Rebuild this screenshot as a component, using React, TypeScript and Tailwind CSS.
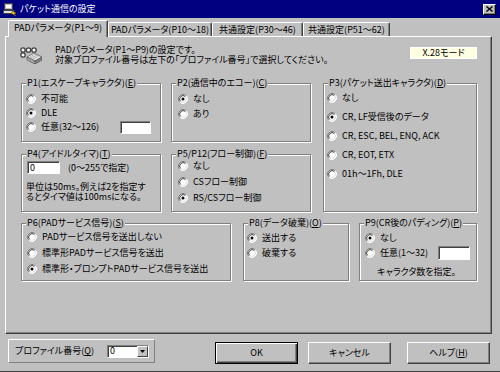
import React from 'react';

// Win2000-style dialog: パケット通信の設定

const Radio: React.FC<{ on?: boolean }> = ({ on }) => (
  <svg width="10" height="10" viewBox="0 0 10 10" className="shrink-0">
    <circle cx="5" cy="5" r="4" fill="#fff" />
    <path d="M1.82 8.18A4.5 4.5 0 0 1 8.18 1.82" fill="none" stroke="#808080" />
    <path d="M8.18 1.82A4.5 4.5 0 0 1 1.82 8.18" fill="none" stroke="#fff" />
    <path d="M2.53 7.47A3.5 3.5 0 0 1 7.47 2.53" fill="none" stroke="#404040" />
    <path d="M7.47 2.53A3.5 3.5 0 0 1 2.53 7.47" fill="none" stroke="#dfdfdf" />
    {on && <circle cx="5" cy="5" r="1.5" fill="#000" />}
  </svg>
);

const Opt: React.FC<{ on?: boolean; h: string; children: React.ReactNode; extra?: React.ReactNode }> = ({ on, h, children, extra }) => (
  <div className={`flex items-center ${h}`}>
    <Radio on={on} />
    <span className="ml-[5px] whitespace-nowrap">{children}</span>
    {extra}
  </div>
);

const Group: React.FC<{ label: React.ReactNode; className?: string; children?: React.ReactNode }> = ({ label, className = '', children }) => (
  <div className={`relative border border-[#808080] shadow-[inset_1px_1px_0_#fff,1px_1px_0_#fff] ${className}`}>
    <span className="absolute left-[4px] top-[-6px] bg-[#c0c0c0] px-[1px] leading-[10px] whitespace-nowrap">{label}</span>
    {children}
  </div>
);

const Field: React.FC<{ className?: string; value?: string }> = ({ className = '', value }) => (
  <div className={`bg-white border border-t-[#808080] border-l-[#808080] border-b-white border-r-white shadow-[inset_1px_1px_0_#404040] pl-[2px] leading-[11px] ${className}`}>
    {value}
  </div>
);

const Tab: React.FC<{ active?: boolean; w: string; children: React.ReactNode }> = ({ active, w, children }) => (
  <div
    className={`${w} flex items-center justify-center whitespace-nowrap rounded-t-[2px] border-t border-l border-white border-r border-r-[#404040] shadow-[inset_-1px_0_0_#808080] bg-[#c0c0c0] ${
      active ? 'h-[17px] -mb-px pb-[2px]' : 'h-[14px]'
    }`}
  >
    {children}
  </div>
);

const Btn: React.FC<{ isDefault?: boolean; className?: string; children: React.ReactNode }> = ({ isDefault, className = '', children }) => (
  <div
    className={`w-[83px] h-[22px] flex items-center justify-center ${
      isDefault
        ? 'border border-black shadow-[inset_1px_1px_0_#fff,inset_-1px_-1px_0_#404040,inset_-2px_-2px_0_#808080]'
        : 'border border-t-white border-l-white border-b-[#404040] border-r-[#404040] shadow-[inset_-1px_-1px_0_#808080]'
    } ${className}`}
  >
    {children}
  </div>
);

const TitleIcon = () => (
  <svg width="14" height="14" viewBox="0 0 14 14" className="shrink-0">
    <rect x="1.5" y="1.5" width="8" height="6" fill="#c0c0c0" stroke="#404040" />
    <rect x="3" y="3" width="5" height="3" fill="#fff" />
    <rect x="0.5" y="8.5" width="10" height="3" fill="#dfdfdf" stroke="#404040" />
    <path d="M9 9l4 2-2 1 2 2-5-3 2-1z" fill="#ffd800" stroke="#806000" strokeWidth="0.6" />
  </svg>
);

const PadIcon = () => (
  <svg width="22" height="17" viewBox="0 0 22 17" className="shrink-0">
    {[3, 8.5, 14].map((x) => (
      <circle key={x} cx={x} cy="3" r="2.2" fill="#fff" stroke="#404040" strokeWidth="1.3" />
    ))}
    <circle cx="3" cy="8" r="2.2" fill="#fff" stroke="#404040" strokeWidth="1.3" />
    <path d="M7 10l7-4 8 4-7 4z" fill="#e8e8e8" stroke="#606060" strokeWidth="0.8" />
    <path d="M7 10l8 4v3l-8-4z" fill="#a8a8a8" stroke="#606060" strokeWidth="0.8" />
    <path d="M15 14l7-4v3l-7 4z" fill="#808080" stroke="#606060" strokeWidth="0.8" />
    <path d="M10 9.5l5 2.5M12 8.3l5 2.5M14 7.2l4.5 2.3" stroke="#909090" strokeWidth="0.7" />
  </svg>
);

export default function App() {
  return (
    <div className="w-[500px] h-[372px] bg-[#c0c0c0] flex flex-col overflow-hidden border-b border-[#404040] text-black text-[9px] font-['Noto_Sans_CJK_JP','Noto_Sans',sans-serif] [font-feature-settings:'palt']">
      {/* title bar */}
      <div className="h-[18px] bg-[#000080] flex items-center pl-[3px] shrink-0">
        <TitleIcon />
        <span className="ml-[3px] text-white text-[9px] leading-[10px]">パケット通信の設定</span>
        <div className="ml-auto mr-[4px] w-[13px] h-[11px] bg-[#c0c0c0] border border-t-white border-l-white border-b-black border-r-black shadow-[inset_-1px_-1px_0_#808080] flex items-center justify-center">
          <svg width="7" height="6" viewBox="0 0 7 6">
            <path d="M0.5 0.5l6 5M6.5 0.5l-6 5" stroke="#000" strokeWidth="1.4" />
          </svg>
        </div>
      </div>

      {/* tab control */}
      <div className="mt-[2px] ml-[5px] w-[487px] shrink-0">
        <div className="relative z-10 flex items-end h-[16px] pl-[3px]">
          <Tab active w="w-[100px]">PADパラメータ(P1～9)</Tab>
          <Tab w="w-[104px]">PADパラメータ(P10～18)</Tab>
          <Tab w="w-[91px]">共通設定(P30～46)</Tab>
          <Tab w="w-[87px]">共通設定(P51～62)</Tab>
        </div>

        <div className="h-[298px] border border-t-white border-l-white border-b-[#404040] border-r-[#404040] shadow-[inset_-1px_-1px_0_#808080] pl-[15px] pt-[8px]">
          {/* header */}
          <div className="flex items-start h-[20px]">
            <div className="mt-[2px] -ml-px">
              <PadIcon />
            </div>
            <div className="ml-[13px] leading-[10px] whitespace-nowrap">
              <div>PADパラメータ(P1～P9)の設定です。</div>
              <div>対象プロファイル番号は左下の「プロファイル番号」で選択してください。</div>
            </div>
            <div className="ml-auto mr-[14px] mt-[2px] w-[67px] h-[12px] bg-[#ffffe1] border border-white flex items-center justify-center leading-[10px]">
              X.28モード
            </div>
          </div>

          {/* row 1 */}
          <div className="flex mt-[18px]">
            <div className="grid grid-cols-[140px_140px] grid-rows-[59px_58px] gap-x-[10px] gap-y-[12px]">
              <Group label={<>P1(エスケープキャラクタ)(<u>E</u>)</>} className="pt-[8px] pl-[4px]">
                <Opt h="h-[14px]">不可能</Opt>
                <Opt h="h-[14px]" on>DLE</Opt>
                <Opt h="h-[14px]" extra={<Field className="ml-auto mr-[9px] w-[31px] h-[13px]" />}>任意(32～126)</Opt>
              </Group>

              <Group label={<>P2(通信中のエコー)(<u>C</u>)</>} className="pt-[7px] pl-[6px]">
                <Opt h="h-[15px]" on>なし</Opt>
                <Opt h="h-[15px]">あり</Opt>
              </Group>

              <Group label={<>P4(アイドルタイマ)(<u>T</u>)</>} className="pt-[6px] pl-[5px]">
                <div className="flex items-center h-[13px]">
                  <Field className="w-[33px] h-[13px]" value="0" />
                  <span className="ml-[8px] whitespace-nowrap">(0～255で指定)</span>
                </div>
                <div className="mt-[8px] -ml-px leading-[10px] whitespace-nowrap">
                  <div>単位は50ms。例えば2を指定す</div>
                  <div>るとタイマ値は100msになる。</div>
                </div>
              </Group>

              <Group label={<>P5/P12(フロー制御)(<u>F</u>)</>} className="pt-[3px] pl-[6px]">
                <Opt h="h-[16px]">なし</Opt>
                <Opt h="h-[16px]">CSフロー制御</Opt>
                <Opt h="h-[16px]" on>RS/CSフロー制御</Opt>
              </Group>
            </div>

            <Group label={<>P3(パケット送出キャラクタ)(<u>D</u>)</>} className="ml-[12px] w-[154px] h-[129px] pt-[4px] pl-[3px]">
              <Opt h="h-[19px]">なし</Opt>
              <Opt h="h-[19px]" on>CR, LF受信後のデータ</Opt>
              <Opt h="h-[19px]">CR, ESC, BEL, ENQ, ACK</Opt>
              <Opt h="h-[19px]">CR, EOT, ETX</Opt>
              <Opt h="h-[19px]">01h～1Fh, DLE</Opt>
            </Group>
          </div>

          {/* row 2 */}
          <div className="flex mt-[11px]">
            <Group label={<>P6(PADサービス信号)(<u>S</u>)</>} className="w-[210px] h-[58px] pt-[5px] pl-[5px]">
              <Opt h="h-[16px]">PADサービス信号を送出しない</Opt>
              <Opt h="h-[16px]">標準形PADサービス信号を送出</Opt>
              <Opt h="h-[16px]" on>標準形・プロンプトPADサービス信号を送出</Opt>
            </Group>

            <Group label={<>P8(データ破棄)(<u>O</u>)</>} className="ml-[12px] w-[106px] h-[58px] pt-[6px] pl-[3px]">
              <Opt h="h-[15px]" on>送出する</Opt>
              <Opt h="h-[15px]">破棄する</Opt>
            </Group>

            <Group label={<>P9(CR後のパディング)(<u>P</u>)</>} className="ml-[10px] w-[118px] h-[58px] pt-[6px] pl-[5px]">
              <Opt h="h-[15px]" on>なし</Opt>
              <Opt h="h-[15px]" extra={<Field className="ml-auto mr-[6px] w-[32px] h-[14px]" />}>任意(1～32)</Opt>
              <div className="mt-[7px] pl-[12px] leading-[10px] whitespace-nowrap">キャラクタ数を指定。</div>
            </Group>
          </div>
        </div>
      </div>

      {/* bottom row */}
      <div className="flex items-start mt-[5px] pl-[8px]">
        <div className="w-[147px] h-[24px] flex items-center pl-[6px] border border-t-white border-l-white border-b-[#808080] border-r-[#808080]">
          <span className="whitespace-nowrap">
            プロファイル番号(<u>Q</u>)
          </span>
          <div className="ml-auto mr-[5px] w-[42px] h-[13px] bg-white border border-t-[#808080] border-l-[#808080] border-b-white border-r-white shadow-[inset_1px_1px_0_#404040] flex items-center">
            <span className="pl-[2px] leading-[10px]">0</span>
            <div className="ml-auto w-[11px] h-[11px] bg-[#c0c0c0] border border-t-white border-l-white border-b-[#404040] border-r-[#404040] flex items-center justify-center">
              <svg width="5" height="3" viewBox="0 0 5 3">
                <path d="M0 0h5L2.5 3z" fill="#000" />
              </svg>
            </div>
          </div>
        </div>

        <Btn isDefault className="ml-[60px] mt-[3px]">OK</Btn>
        <Btn className="ml-[10px] mt-[3px]">キャンセル</Btn>
        <Btn className="ml-[16px] mt-[3px]">
          ヘルプ(<u>H</u>)
        </Btn>
      </div>
    </div>
  );
}
